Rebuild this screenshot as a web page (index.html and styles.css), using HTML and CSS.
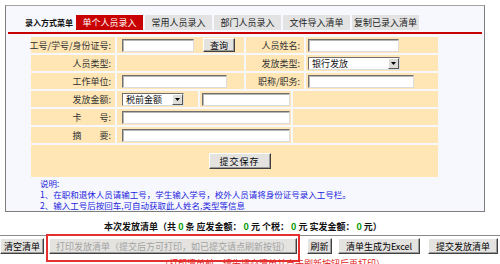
FILE: index.html
```html
<!DOCTYPE html>
<html lang="zh-CN">
<head>
    <meta charset="UTF-8">
    <title>发放清单录入</title>
    <link rel="stylesheet" href="styles.css">
</head>
<body>
    <div class="panel">
        <div class="tabbar">
            <span class="tabbar-title">录入方式菜单</span>
            <span class="tab active">单个人员录入</span>
            <span class="tab">常用人员录入</span>
            <span class="tab">部门人员录入</span>
            <span class="tab">文件导入清单</span>
            <span class="tab">复制已录入清单</span>
        </div>

        <div class="form">
            <div class="row row-a">
                <div class="cell label">工号/学号/身份证号:</div>
                <div class="cell">
                    <input type="text" class="field w-72">
                    <button class="btn btn-query">查询</button>
                </div>
                <div class="cell label">人员姓名:</div>
                <div class="cell tight"><input type="text" class="field w-91"></div>
            </div>
            <div class="row row-a">
                <div class="cell label">人员类型:</div>
                <div class="cell"></div>
                <div class="cell label">发放类型:</div>
                <div class="cell tight">
                    <span class="select w-92">银行发放<span class="arrow"><svg width="5" height="3" viewBox="0 0 5 3"><path d="M0 0h5L2.5 3z" fill="#000"/></svg></span></span>
                </div>
            </div>
            <div class="row row-a">
                <div class="cell label">工作单位:</div>
                <div class="cell"><input type="text" class="field w-105"></div>
                <div class="cell label">职称/职务:</div>
                <div class="cell tight"><input type="text" class="field w-106"></div>
            </div>
            <div class="row row-b">
                <div class="cell label">发放金额:</div>
                <div class="cell">
                    <span class="select w-62">税前金额<span class="arrow"><svg width="5" height="3" viewBox="0 0 5 3"><path d="M0 0h5L2.5 3z" fill="#000"/></svg></span></span>
                </div>
                <div class="cell tight"><input type="text" class="field w-88"></div>
                <div class="cell"></div>
            </div>
            <div class="row row-c">
                <div class="cell label">卡&emsp;&emsp;号:</div>
                <div class="cell"><input type="text" class="field w-168"></div>
                <div class="cell"></div>
            </div>
            <div class="row row-c">
                <div class="cell label">摘&emsp;&emsp;要:</div>
                <div class="cell"><input type="text" class="field w-168"></div>
                <div class="cell"></div>
            </div>
            <div class="row row-submit">
                <div class="cell center"><button class="btn btn-save">提交保存</button></div>
            </div>
        </div>

        <div class="notes">
            <div>说明:</div>
            <div>1、在职和退休人员请输工号，学生输入学号，校外人员请将身份证号录入工号栏。</div>
            <div>2、输入工号后按回车,可自动获取此人姓名,类型等信息</div>
        </div>
    </div>

    <div class="summary">
        本次发放清单（共 <span class="num">0</span> 条 应发金额： <span class="num">0</span> 元 个税： <span class="num">0</span> 元 实发金额： <span class="num">0</span> 元）
    </div>

    <div class="toolbar">
        <button class="btn btn-clear">清空清单</button>
        <span class="print-wrap">
            <button class="btn btn-print" disabled>打印发放清单（提交后方可打印，如已提交请点刷新按钮）</button>
            <span class="highlight"></span>
        </span>
        <button class="btn btn-refresh">刷新</button>
        <button class="btn btn-excel">清单生成为Excel</button>
        <button class="btn btn-submit">提交发放清单</button>
    </div>
    <div class="hint">（打印清单前，请先提交清单并点击刷新按钮后再打印）</div>
</body>
</html>
```

FILE: styles.css
```css
* {
    box-sizing: border-box;
}

body {
    margin: 0;
    background-color: #fff;
    color: #222;
    font-family: "Noto Sans CJK SC", "Liberation Sans", sans-serif;
    font-size: 9px;
    overflow: hidden;
}

.panel {
    margin: 5px 0 0 5px;
    width: 480px;
    height: 207px;
    border: 1px solid #7d7d7d;
    border-top-color: #a3a3a3;
    background-color: #f6f8fd;
}

/* 录入方式 菜单 */
.tabbar {
    display: flex;
    align-items: center;
    margin: 9px 2px 0;
    padding: 0 0 2px 17px;
    border-bottom: 2px solid #c80000;
}

.tabbar-title {
    width: 51px;
    font-size: 8px;
    font-weight: bold;
    color: #111;
    white-space: nowrap;
}

.tab {
    width: 67px;
    height: 15px;
    line-height: 15px;
    margin-right: 2px;
    text-align: center;
    background-color: #e3e3e3;
    color: #222;
    white-space: nowrap;
}

.tab.active {
    background-color: #c90000;
    color: #fff;
}

/* 表单 */
.form {
    margin: 3px 0 0 25px;
    width: 407px;
    display: flex;
    flex-direction: column;
    gap: 2px;
}

.row {
    display: grid;
    gap: 2px;
    height: 16px;
}

.row-a {
    grid-template-columns: 84px 127px 58px 1fr;
}

.row-b {
    grid-template-columns: 84px 81px 91px 1fr;
}

.row-c {
    grid-template-columns: 84px 174px 1fr;
}

.row-submit {
    height: 32px;
    grid-template-columns: 1fr;
}

.cell {
    display: flex;
    align-items: center;
    padding-left: 5px;
    background-color: #ffe6b4;
    white-space: nowrap;
}

.cell.tight {
    padding-left: 2px;
}

.cell.label {
    justify-content: flex-end;
    padding: 0 4px 0 0;
    color: #333;
}

.cell.center {
    justify-content: center;
    padding-left: 10px;
}

.field {
    height: 13px;
    padding: 0 2px;
    background-color: #fff;
    border: 1px solid;
    border-color: #6f6f6f #dcdcdc #dcdcdc #6f6f6f;
    box-shadow: inset 1px 1px 0 #b5b5b5;
    font: inherit;
    outline: none;
}

.w-72 { width: 72px; }
.w-88 { width: 88px; }
.w-91 { width: 91px; }
.w-105 { width: 105px; }
.w-106 { width: 106px; }
.w-168 { width: 168px; }
.w-62 { width: 62px; }
.w-92 { width: 92px; }

.select {
    display: flex;
    align-items: center;
    height: 13px;
    padding-left: 3px;
    background-color: #fff;
    border: 1px solid;
    border-color: #6f6f6f #dcdcdc #dcdcdc #6f6f6f;
    color: #111;
}

.select .arrow {
    display: flex;
    align-items: center;
    justify-content: center;
    width: 11px;
    height: 11px;
    margin-left: auto;
    background-color: #dedcd8;
    border: 1px solid;
    border-color: #fff #555 #555 #fff;
}

/* 按钮 */
.btn {
    height: 16px;
    padding: 0 4px;
    background-color: #e4e3e0;
    border: 1px solid;
    border-color: #fff #404040 #404040 #fff;
    box-shadow: inset -1px -1px 0 #9c9c9c;
    color: #000;
    font: inherit;
    line-height: 13px;
    white-space: nowrap;
}

.btn-query {
    width: 32px;
    height: 14px;
    margin-left: 9px;
    padding: 0;
}

.btn-save {
    width: 62px;
    padding: 0;
    letter-spacing: 1px;
}

.notes {
    margin: 1px 0 0 34px;
    color: #2323e0;
    font-size: 8.5px;
    line-height: 11px;
}

.summary {
    width: 486px;
    margin-top: 9px;
    line-height: 12px;
    text-align: center;
    font-weight: bold;
    color: #111;
}

.num {
    color: #009900;
}

.toolbar {
    display: flex;
    align-items: center;
    margin-top: 2px;
    padding-top: 2px;
    border-top: 1px solid #8a8a8a;
}

.btn-clear {
    width: 44px;
    padding: 0;
}

.print-wrap {
    position: relative;
    display: flex;
    margin-left: 5px;
}

.btn-print {
    width: 248px;
    color: #a2a2a2;
}

.highlight {
    position: absolute;
    left: -3px;
    top: -4px;
    width: 254px;
    height: 28px;
    border: 2px solid #e53030;
}

.btn-refresh {
    width: 25px;
    margin-left: 10px;
    padding: 0;
}

.btn-excel {
    width: 82px;
    margin-left: 6px;
    padding: 0;
}

.btn-submit {
    width: 70px;
    margin-left: 8px;
    padding: 0;
}

.hint {
    margin: 4px 0 0 160px;
    color: #e02020;
    line-height: 12px;
}
```
